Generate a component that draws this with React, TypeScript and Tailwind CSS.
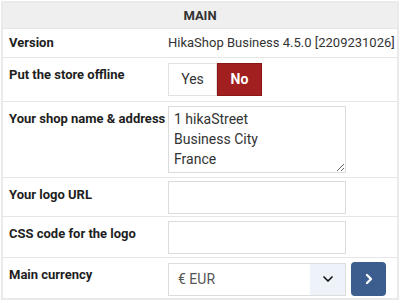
import { ChevronDown, ChevronRight } from 'lucide-react'

const font = { fontFamily: 'Roboto, "Liberation Sans", sans-serif' }

function Row({ label, children, className = '' }: { label: string; children?: React.ReactNode; className?: string }) {
  return (
    <div className={`flex border-t border-[#e6e6e6] ${className}`}>
      <div className="w-[165px] shrink-0 pl-[6px] pt-[8px] text-[13px] font-bold leading-[18px] text-[#1e1e1e]">{label}</div>
      <div className="flex-1 pt-[4px] pb-[4px]">{children}</div>
    </div>
  )
}

export default function App() {
  return (
    <div className="bg-white p-px" style={font}>
      <div className="border-2 border-[#eaeaea]">
        <div className="flex h-[25px] items-center justify-center bg-[#efefef] text-[13px] font-bold text-[#333]">
          MAIN
        </div>

        <div className="flex h-[29px] items-center border-t border-[#e6e6e6]">
          <div className="w-[165px] shrink-0 pl-[6px] text-[13px] font-bold text-[#1e1e1e]">Version</div>
          <div className="flex-1 whitespace-nowrap text-[13px] text-[#333]">HikaShop Business 4.5.0 [2209231026]</div>
        </div>

        <Row label="Put the store offline" className="h-[44px]">
          <div className="mt-px flex h-[33px] w-[94px] text-[14px]">
            <div className="flex w-[49px] items-center justify-center border border-[#e2e2e2] text-[#333]">Yes</div>
            <div className="flex w-[45px] items-center justify-center border border-[#8a1616] bg-[#a11f1f] font-bold text-white">No</div>
          </div>
        </Row>

        <Row label="Your shop name & address" className="h-[76px]">
          <textarea
            defaultValue={'1 hikaStreet\nBusiness City\nFrance'}
            className="h-[67px] w-[178px] resize border border-[#dcdcdc] px-[5px] py-[2px] text-[14px] leading-[20px] text-[#333] outline-none"
            style={font}
          />
        </Row>

        <Row label="Your logo URL" className="h-[39px]">
          <input className="mt-[-1px] block h-[33px] w-[178px] border border-[#dcdcdc] outline-none" />
        </Row>

        <Row label="CSS code for the logo" className="h-[41px]">
          <input className="block h-[33px] w-[178px] border border-[#dcdcdc] outline-none" />
        </Row>

        <Row label="Main currency" className="h-[41px]">
          <div className="flex items-center gap-[5px]">
            <div className="flex h-[33px] w-[178px] border border-[#dcdcdc]">
              <div className="flex flex-1 items-center pl-[9px] text-[14px] text-[#555]">€ EUR</div>
              <div className="flex w-[35px] items-center justify-center bg-[#eef2f9] text-[#111]">
                <ChevronDown size={16} strokeWidth={2.5} />
              </div>
            </div>
            <button className="flex h-[34px] w-[35px] items-center justify-center rounded-[4px] bg-[#3b5e8e] text-white">
              <ChevronRight size={16} strokeWidth={3.5} />
            </button>
          </div>
        </Row>
      </div>
    </div>
  )
}
